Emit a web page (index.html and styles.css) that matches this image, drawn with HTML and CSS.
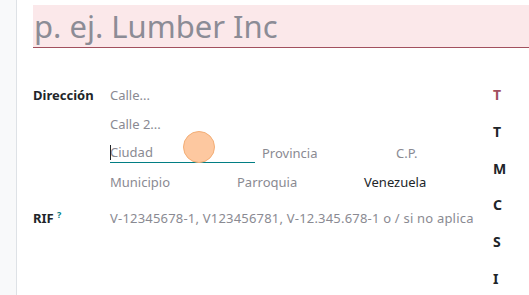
FILE: index.html
```html
<!DOCTYPE html>
<html lang="es">
<head>
    <meta charset="UTF-8">
    <title>Contacto</title>
    <link rel="stylesheet" href="styles.css">
</head>
<body>
    <!-- barra lateral vacía -->
    <aside class="side-strip"></aside>

    <main class="sheet">
        <div class="title-field">
            <span class="placeholder">p. ej. Lumber Inc</span>
        </div>

        <div class="groups">
            <div class="group-left">
                <div class="row">
                    <label class="lbl">Dirección</label>
                    <div class="address">
                        <div class="field"><span class="placeholder">Calle...</span></div>
                        <div class="field"><span class="placeholder">Calle 2...</span></div>
                        <div class="field-line">
                            <div class="field city focused"><span class="caret"></span><span class="placeholder">Ciudad</span></div>
                            <div class="field state"><span class="placeholder">Provincia</span></div>
                            <div class="field zip"><span class="placeholder">C.P.</span></div>
                        </div>
                        <div class="field-line thirds">
                            <div class="field"><span class="placeholder">Municipio</span></div>
                            <div class="field"><span class="placeholder">Parroquia</span></div>
                            <div class="field"><span class="value">Venezuela</span></div>
                        </div>
                    </div>
                </div>
                <div class="row rif">
                    <label class="lbl">RIF <sup class="help">?</sup></label>
                    <div class="field"><span class="placeholder wide">V-12345678-1, V123456781, V-12.345.678-1 o / si no aplica</span></div>
                </div>
            </div>

            <div class="group-right">
                <div class="lbl required">T</div>
                <div class="lbl">T</div>
                <div class="lbl">M</div>
                <div class="lbl">C</div>
                <div class="lbl">S</div>
                <div class="lbl">I</div>
            </div>
        </div>

        <!-- marca del clic -->
        <span class="click-dot"></span>
    </main>
</body>
</html>
```

FILE: styles.css
```css
* {
    box-sizing: border-box;
    margin: 0;
    padding: 0;
}

body {
    font-family: "Noto Sans", "Open Sans", sans-serif;
    font-size: 13px;
    color: #212529;
    background: #fff;
    display: flex;
    height: 295px;
    overflow: hidden;
}

.side-strip {
    width: 17px;
    flex-shrink: 0;
    background: #f8f9fa;
    border-right: 1px solid #dee2e6;
}

.sheet {
    position: relative;
    flex: 1;
    padding: 5px 0 0 16px;
    overflow: hidden;
}

/* nombre */
.title-field {
    height: 43px;
    background: #fbe8ea;
    border-bottom: 1px solid #a2505e;
    display: flex;
    align-items: center;
    padding-left: 1px;
}

.title-field .placeholder {
    font-size: 31px;
    color: #8c8c96;
    white-space: nowrap;
}

.groups {
    display: flex;
    margin-top: 37px;
}

.group-left {
    width: 460px;
    flex-shrink: 0;
}

.row {
    display: flex;
}

.lbl {
    width: 77px;
    flex-shrink: 0;
    font-weight: bold;
    line-height: 20px;
    white-space: nowrap;
}

.address {
    width: 374px;
    display: flex;
    flex-direction: column;
    gap: 9px;
}

.field {
    height: 20px;
    line-height: 20px;
    white-space: nowrap;
}

.placeholder {
    color: #8a8a92;
}

.placeholder.wide {
    letter-spacing: 0.2px;
}

.value {
    color: #212529;
}

.field-line {
    display: flex;
    gap: 7px;
}

.city {
    width: 145px;
    position: relative;
    border-bottom: 1px solid #017e84;
    line-height: 19px;
}

.caret {
    position: absolute;
    left: 0;
    top: 2px;
    width: 1px;
    height: 15px;
    background: #212529;
}

.state {
    width: 127px;
}

.zip {
    flex: 1;
}

.thirds .field {
    flex: 1;
}

.rif {
    margin-top: 16px;
}

.help {
    color: #017e84;
    font-size: 9px;
    vertical-align: top;
    position: relative;
    top: -3px;
}

.group-right {
    display: flex;
    flex-direction: column;
    gap: 16.8px;
}

.group-right .lbl {
    width: auto;
    font-size: 14px;
}

.required {
    color: #a2505e;
}

.click-dot {
    position: absolute;
    left: 166px;
    top: 131px;
    width: 32px;
    height: 32px;
    border-radius: 50%;
    background: #fdc8a0;
    border: 1px solid #f3ae76;
}
```
